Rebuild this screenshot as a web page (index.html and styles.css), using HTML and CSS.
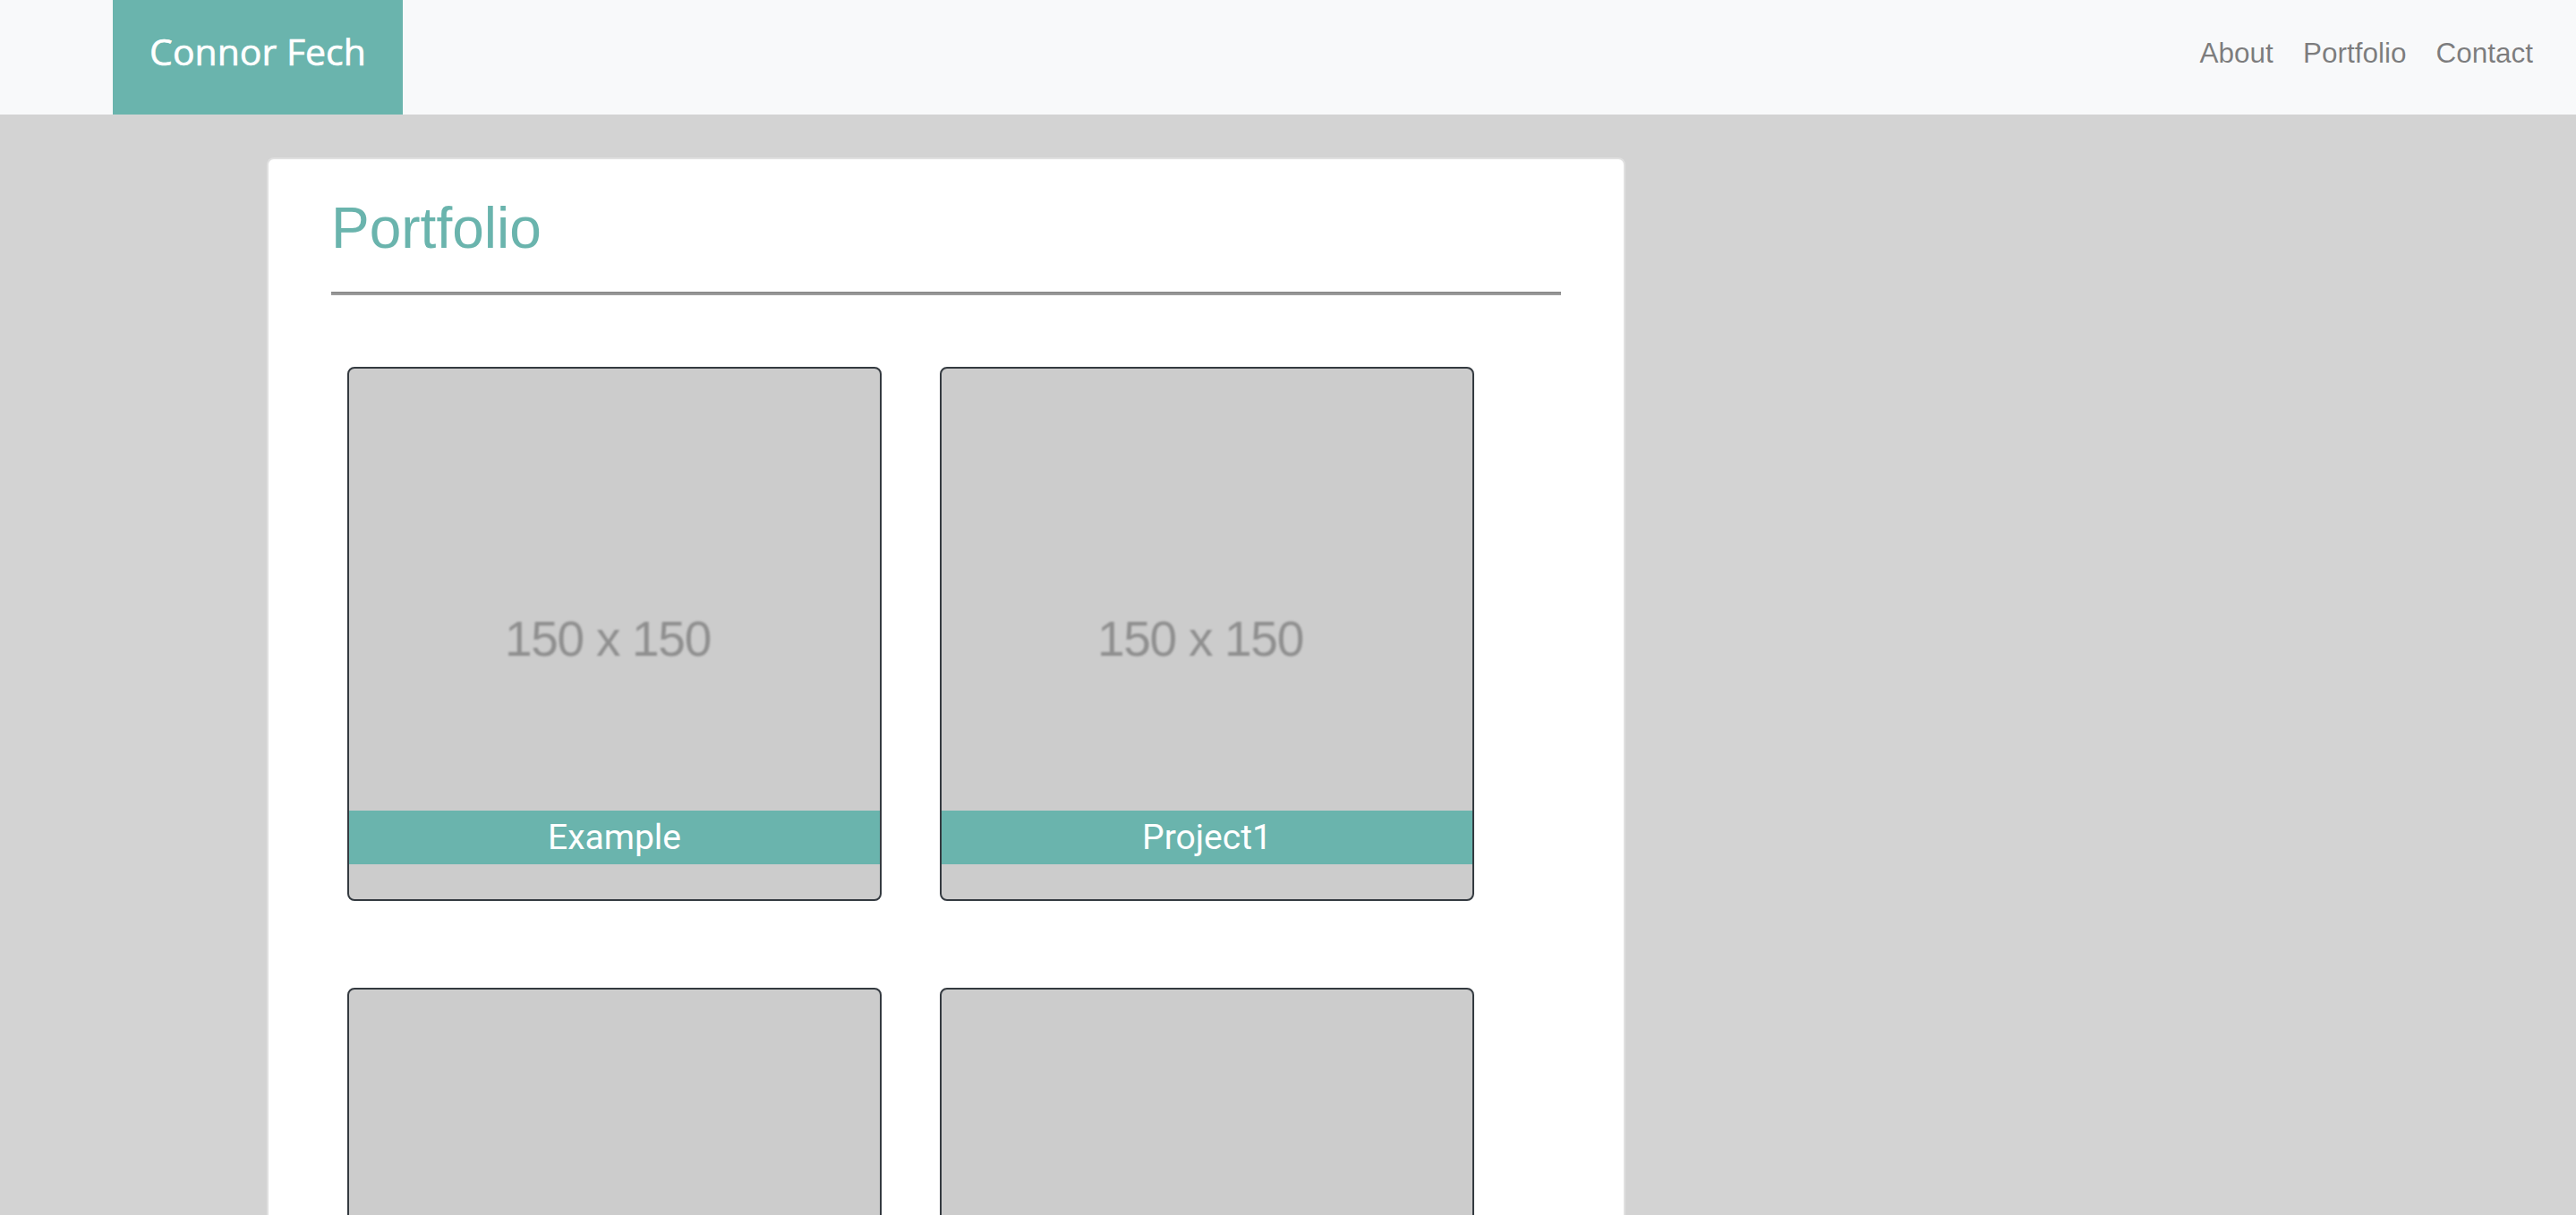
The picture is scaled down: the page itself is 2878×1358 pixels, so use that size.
FILE: index.html
```html
<!DOCTYPE html>
<html lang="en">
<head>
<meta charset="utf-8">
<title>Connor Fech - Portfolio</title>
<link rel="stylesheet" href="styles.css">
</head>
<body>
<nav class="navbar">
  <a class="brand" href="#">Connor Fech</a>
  <ul class="nav-links">
    <li><a href="#">About</a></li>
    <li><a href="#">Portfolio</a></li>
    <li><a href="#">Contact</a></li>
  </ul>
</nav>
<main class="card">
  <h1 class="title">Portfolio</h1>
  <hr class="rule">
  <div class="grid">
    <div class="tile">
      <div class="ph"><span>150 x 150</span></div>
      <div class="caption">Example</div>
    </div>
    <div class="tile">
      <div class="ph"><span>150 x 150</span></div>
      <div class="caption">Project1</div>
    </div>
    <div class="tile">
      <div class="ph"><span>150 x 150</span></div>
      <div class="caption">Project2</div>
    </div>
    <div class="tile">
      <div class="ph"><span>150 x 150</span></div>
      <div class="caption">Project3</div>
    </div>
  </div>
</main>
</body>
</html>
```
FILE: styles.css
```css
html, body {
  margin: 0;
  padding: 0;
}
body {
  background: #d3d3d3;
  font-family: "Liberation Sans", Arial, sans-serif;
}
.navbar {
  display: flex;
  align-items: stretch;
  justify-content: space-between;
  height: 128px;
  background: #f8f9fa;
  padding: 0 48px 0 126px;
}
.brand {
  display: flex;
  align-items: center;
  justify-content: center;
  width: 324px;
  background: #6ab4ad;
  color: #fff;
  text-decoration: none;
  font-family: "Open Sans", sans-serif;
  font-weight: 500;
  font-size: 41px;
  padding-bottom: 15px;
  box-sizing: border-box;
  -webkit-text-stroke: 0.6px #fff;
}
.nav-links {
  display: flex;
  align-items: center;
  list-style: none;
  margin: 0;
  padding: 0 0 10px 0;
  gap: 33px;
}
.nav-links a {
  color: rgba(0, 0, 0, 0.5);
  text-decoration: none;
  font-size: 31.5px;
}
.card {
  margin: 48px 0 0 298px;
  width: 1518px;
  box-sizing: border-box;
  background: #fff;
  border: 2px solid rgba(0, 0, 0, 0.12);
  border-radius: 8px;
  padding: 39px 70px 200px 70px;
}
.title {
  margin: 0;
  font-size: 64px;
  line-height: 1.2;
  font-weight: normal;
  color: #6ab4ad;
}
.rule {
  margin: 32px 0 0 0;
  border: 0;
  height: 4px;
  background: linear-gradient(#8c8c8c 0 50%, #9c9c9c 50% 100%);
}
.grid {
  display: flex;
  flex-wrap: wrap;
  column-gap: 65px;
  row-gap: 97px;
  padding-left: 18px;
  margin-top: 80px;
}
.tile {
  position: relative;
  width: 597px;
  height: 597px;
  box-sizing: border-box;
  border: 2px solid #343a40;
  border-radius: 8px;
  background: #cccccc;
  overflow: hidden;
}
.ph {
  height: 100%;
  display: flex;
  align-items: center;
  justify-content: center;
  padding: 12px 15px 0 0;
  box-sizing: border-box;
}
.ph span {
  font-family: "Liberation Sans", Arial, sans-serif;
  font-size: 55px;
  letter-spacing: -1.3px;
  color: #8f8f8f;
  filter: blur(1.3px);
}
.caption {
  position: absolute;
  left: 0;
  right: 0;
  bottom: 39px;
  height: 60px;
  display: flex;
  align-items: center;
  justify-content: center;
  background: #6ab4ad;
  color: #fff;
  font-family: Roboto, "Liberation Sans", sans-serif;
  font-size: 39px;
}
```
